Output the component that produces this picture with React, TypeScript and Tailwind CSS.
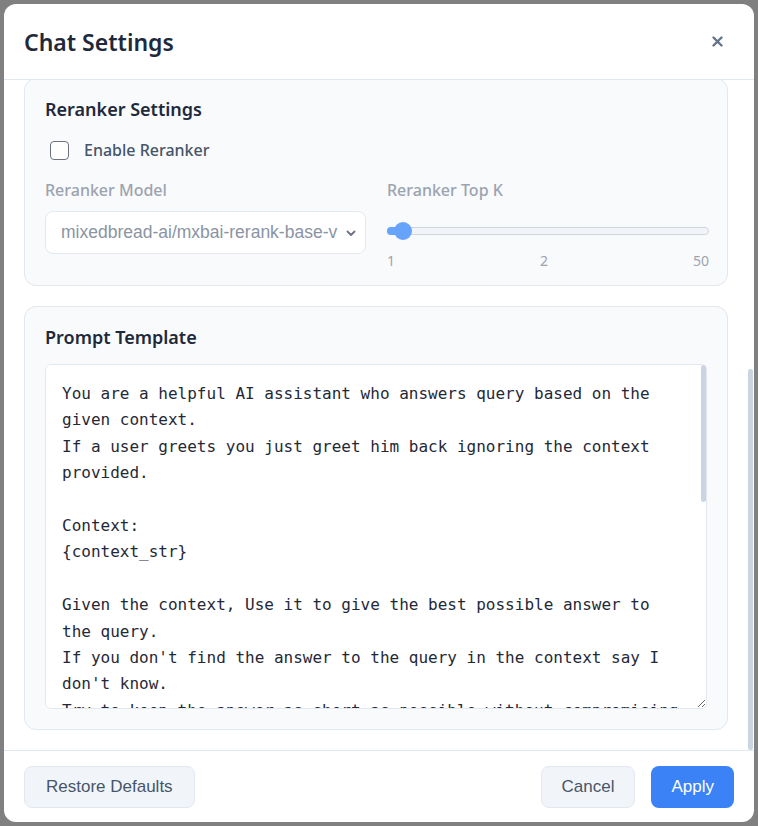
import React, { useLayoutEffect, useRef } from 'react';

const PROMPT = `You are a helpful AI assistant who answers query based on the given context.
If a user greets you just greet him back ignoring the context provided.

Context:
{context_str}

Given the context, Use it to give the best possible answer to the query.
If you don't find the answer to the query in the context say I don't know.
Try to keep the answer as short as possible without compromising on the quality of the answer.

Query: {query_str}
Answer:`;

const Chevron = () => (
  <svg width="12" height="12" viewBox="0 0 12 12" fill="none" className="pointer-events-none absolute right-[9px] top-1/2 -translate-y-1/2">
    <path d="M2.5 4.5 6 8l3.5-3.5" stroke="#6b7280" strokeWidth="1.8" strokeLinecap="round" strokeLinejoin="round" />
  </svg>
);

const SelectField = ({ label, value, disabled }: { label: string; value: string; disabled?: boolean }) => (
  <div className="flex flex-col">
    <label className={`text-base font-medium leading-6 mb-[9px] ${disabled ? 'text-[#9ca3af]' : 'text-[#475569]'}`}>{label}</label>
    <div className="relative">
      <select
        disabled={disabled}
        defaultValue={value}
        className={`appearance-none w-full h-[43px] rounded-lg border border-[#e5e7eb] bg-white pl-[15px] pr-[27px] font-['Liberation_Sans',Arial,sans-serif] text-[17.5px] outline-none ${disabled ? 'text-[#8a94a3]' : 'text-[#334155]'}`}
      >
        <option>{value}</option>
      </select>
      <Chevron />
    </div>
  </div>
);

const SliderField = ({ label, min, mid, max, pos, disabled }: { label: string; min: string; mid: string; max: string; pos: number; disabled?: boolean }) => (
  <div className="flex flex-col">
    <label className={`text-base font-medium leading-6 mb-[9px] ${disabled ? 'text-[#9ca3af]' : 'text-[#475569]'}`}>{label}</label>
    <div className="relative h-10 flex items-center">
      <div className="h-2 w-full rounded-full bg-[#f1f5f9] border border-[#d1d5db]" />
      <div className="absolute left-0 h-2 rounded-l-full bg-[#66a3fb]" style={{ width: pos + 9 }} />
      <div className="absolute h-[18px] w-[18px] rounded-full bg-[#66a3fb]" style={{ left: pos }} />
    </div>
    <div className="flex justify-between text-sm leading-5 text-[#9ca3af]">
      <span>{min}</span>
      <span>{mid}</span>
      <span>{max}</span>
    </div>
  </div>
);

export default function App() {
  const bodyRef = useRef<HTMLDivElement>(null);

  useLayoutEffect(() => {
    if (bodyRef.current) bodyRef.current.scrollTop = bodyRef.current.scrollHeight;
  }, []);

  return (
    <div className="h-[826px] w-full bg-[#808080] p-1 font-['Noto_Sans',sans-serif]">
      <div className="h-full w-full bg-white rounded-xl flex flex-col overflow-hidden">
        {/* Header */}
        <div className="h-[76px] shrink-0 flex items-center justify-between pl-5 pr-[31px] border-b border-[#e2e8f0]">
          <h2 className="text-[23px] font-semibold text-[#1e293b] mt-0.5">Chat Settings</h2>
          <button className="text-[#64748b]">
            <svg width="11" height="11" viewBox="0 0 11 11" fill="none">
              <path d="M1.5 1.5l8 8M9.5 1.5l-8 8" stroke="currentColor" strokeWidth="2.4" strokeLinecap="round" />
            </svg>
          </button>
        </div>

        {/* Body */}
        <div className="relative flex-1 min-h-0">
          <div
            ref={bodyRef}
            className="h-full overflow-y-auto pl-5 pr-[26px] pt-5 pb-5 flex flex-col gap-5 [scrollbar-width:none]"
          >
            <section className="shrink-0 rounded-xl border border-[#e2e8f0] bg-[#f8fafc] px-5 pt-4 pb-3.5">
              <h3 className="text-lg leading-7 font-semibold text-[#1e293b]">Model Settings</h3>
              <div className="grid grid-cols-2 gap-5 mt-4">
                <SelectField label="LLM Model" value="llama3.1:8b" />
                <SelectField label="Embedding Model" value="nomic-embed-text" />
              </div>
              <div className="grid grid-cols-2 gap-5 mt-4">
                <SliderField label="Temperature" min="0" mid="0.1" max="1" pos={40} />
                <SliderField label="Top K" min="1" mid="5" max="20" pos={70} />
              </div>
            </section>

            <section className="shrink-0 rounded-xl border border-[#e2e8f0] bg-[#f8fafc] pl-5 pr-[18px] pt-4 pb-3.5">
              <h3 className="text-lg leading-7 font-semibold text-[#1e293b]">Reranker Settings</h3>
              <div className="mt-[15px] h-6 flex items-center gap-[15px] pl-[5px]">
                <input type="checkbox" className="appearance-none w-[19px] h-[19px] rounded-[4px] border-[1.5px] border-[#6b7280] bg-white" />
                <span className="text-base font-medium text-[#475569]">Enable Reranker</span>
              </div>
              <div className="grid grid-cols-[321px_1fr] gap-[21px] mt-4">
                <SelectField label="Reranker Model" value="mixedbread-ai/mxbai-rerank-base-v1" disabled />
                <SliderField label="Reranker Top K" min="1" mid="2" max="50" pos={7} disabled />
              </div>
            </section>

            <section className="shrink-0 rounded-xl border border-[#e2e8f0] bg-[#f8fafc] px-5 pt-4 pb-5">
              <h3 className="text-lg leading-7 font-semibold text-[#1e293b] mb-[13px]">Prompt Template</h3>
              <div className="relative">
                <textarea
                  defaultValue={PROMPT}
                  spellCheck={false}
                  className="block w-full h-[345px] rounded-md border border-[#e2e8f0] bg-white pl-4 pr-[22px] pt-4 pb-3 font-['DejaVu_Sans_Mono',monospace] text-base leading-[26.4px] text-[#1f2937] outline-none [scrollbar-width:none]"
                />
                {/* textarea scroll thumb */}
                <div className="pointer-events-none absolute right-px top-px h-[137px] w-[5px] rounded-full bg-[#cbd5e1]" />
              </div>
            </section>
          </div>
          {/* body scroll thumb */}
          <div className="pointer-events-none absolute right-px top-[289px] h-[381px] w-[5px] rounded-full bg-[#cbd5e1]" />
        </div>

        {/* Footer */}
        <div className="shrink-0 border-t border-[#e2e8f0] px-5 pt-[15px] pb-[14px] flex items-center justify-between font-['Liberation_Sans',Arial,sans-serif] text-[17px]">
          <button className="h-[42px] px-[21px] rounded-lg border border-[#e2e8f0] bg-[#f1f5f9] text-[#475569]">Restore Defaults</button>
          <div className="flex gap-4">
            <button className="h-[42px] px-5 rounded-lg border border-[#e2e8f0] bg-[#f1f5f9] text-[#475569]">Cancel</button>
            <button className="h-[42px] px-5 rounded-lg bg-[#3b82f6] text-white">Apply</button>
          </div>
        </div>
      </div>
    </div>
  );
}
